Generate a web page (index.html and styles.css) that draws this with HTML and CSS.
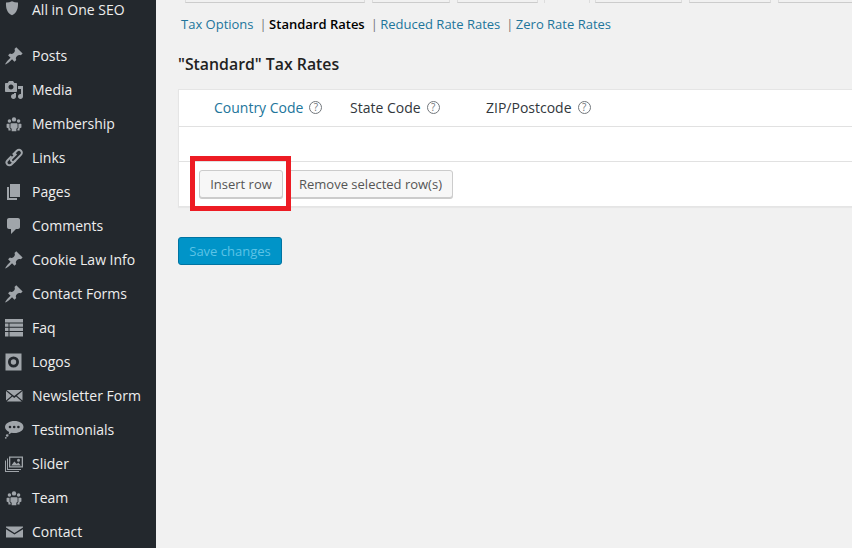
FILE: index.html
```html
<!DOCTYPE html>
<html lang="en">
<head>
<meta charset="utf-8">
<title>Standard Tax Rates</title>
<link rel="stylesheet" href="styles.css">
</head>
<body>
<svg class="defs" width="0" height="0" aria-hidden="true">
  <defs>
    <symbol id="i-pin" viewBox="0 0 20 20"><path d="M10.440 3.020l1.820-1.820 6.360 6.350-1.830 1.820c-1.050-.68-2.480-.57-3.410.36l-.75.75c-.92.93-1.040 2.350-.35 3.410l-1.830 1.820-2.410-2.410-2.800 2.790c-.42.42-3.380 2.710-3.800 2.290s1.860-3.390 2.280-3.810l2.790-2.790L4.100 9.360l1.830-1.820c1.050.69 2.480.57 3.400-.36l.75-.75c.93-.92 1.050-2.350.36-3.410z"/></symbol>
    <symbol id="i-group" viewBox="-2 -2 24 24"><circle cx="10" cy="4.500" r="2.600"/><circle cx="4.500" cy="6.500" r="2.100"/><circle cx="15.500" cy="6.500" r="2.100"/><path d="M6.700 9.200h6.600c.6 0 1 .4 1 1v4.300l-1.500 1.100v3.100H7.200v-3.100l-1.500-1.100v-4.300c0-.6.400-1 1-1z"/><path d="M1.700 9.600h3v5.300l1.200 1v1.900H3.300v-2.300l-2.200-1.400v-3.900c0-.3.300-.6.600-.6zM15.300 9.600h3c.3 0 .6.300.6.6v3.900l-2.200 1.400v2.300h-2.600v-1.900l1.200-1z"/></symbol>
  </defs>
</svg>
<div class="page">
  <nav class="sidebar">
    <ul class="menu">
      <li class="item item-first">
        <span class="icon"><svg viewBox="0 0 25 25"><path d="M10 1.500c2.500 1.200 5 1.600 7.500 1.500.3 6.500-.8 12.700-7.500 16C3.300 15.700 2.200 9.500 2.500 3c2.500.1 5-.3 7.500-1.500z"/></svg></span>
        <span class="label">All in One SEO</span>
      </li>
      <li class="item item-gap"><span class="icon"><svg><use href="#i-pin"/></svg></span><span class="label">Posts</span></li>
      <li class="item">
        <span class="icon"><svg viewBox="0 0 20 20"><path d="M13 11V4c0-.55-.45-1-1-1h-1.670L9 1H5L3.670 3H2c-.55 0-1 .45-1 1v7c0 .55.45 1 1 1h10c.55 0 1-.45 1-1zM7 4.500c1.380 0 2.500 1.120 2.500 2.500S8.380 9.500 7 9.500 4.500 8.380 4.500 7 5.620 4.500 7 4.500zM14 6h5v10.500c0 1.380-1.120 2.500-2.500 2.500S14 17.880 14 16.500s1.120-2.500 2.500-2.500c.17 0 .34.020.5.050V9h-3V6zm-4 8.050V13h2v3.500c0 1.380-1.120 2.500-2.500 2.500S7 17.880 7 16.500 8.120 14 9.500 14c.17 0 .34.020.5.050z"/></svg></span>
        <span class="label">Media</span>
      </li>
      <li class="item"><span class="icon"><svg><use href="#i-group"/></svg></span><span class="label">Membership</span></li>
      <li class="item">
        <span class="icon"><svg viewBox="0 0 20 20" class="stroke"><path d="M8.800 6.800l4-4c1.300-1.200 3.100-1.200 4.200-.1 1.200 1.200 1.100 3-.1 4.200l-6.200 6.300c-1 1-2.300 1-3.100.2-.8-.8-.8-2 .1-2.900l4.700-4.700"/><path d="M7.500 8.200l-3.900 4c-1.300 1.300-1.400 3.100-.2 4.300 1.200 1.200 3 1.100 4.300-.2l4-4"/></svg></span>
        <span class="label">Links</span>
      </li>
      <li class="item">
        <span class="icon"><svg viewBox="0 0 20 20"><path d="M6 15V2h10v13H6zm-1 1h8v2H3V5h2v11z"/></svg></span>
        <span class="label">Pages</span>
      </li>
      <li class="item">
        <span class="icon"><svg viewBox="0 0 20 20"><path d="M5 2h9c1.100 0 2 .9 2 2v7c0 1.100-.9 2-2 2h-2l-5 5v-5H5c-1.100 0-2-.9-2-2V4c0-1.100.9-2 2-2z"/></svg></span>
        <span class="label">Comments</span>
      </li>
      <li class="item"><span class="icon"><svg><use href="#i-pin"/></svg></span><span class="label">Cookie Law Info</span></li>
      <li class="item"><span class="icon"><svg><use href="#i-pin"/></svg></span><span class="label">Contact Forms</span></li>
      <li class="item">
        <span class="icon"><svg viewBox="0 0 20 20"><path d="M1 1h18v3.500H1zM1 5.500h3.500v3.200H1zM5.500 5.500H19v3.200H5.500zM1 9.700h3.500v3.200H1zM5.500 9.700H19v3.200H5.500zM1 13.900h3.500v4.600H1zM5.500 13.900H19v4.600H5.500z"/></svg></span>
        <span class="label">Faq</span>
      </li>
      <li class="item">
        <span class="icon"><svg viewBox="0 0 20 20"><path fill-rule="evenodd" d="M1.500 1.500h16v17h-16zM9.500 4.500a5.500 5.500 0 1 0 0 11 5.500 5.500 0 0 0 0-11zM9.500 7.300a2.700 2.700 0 1 1 0 5.400 2.700 2.700 0 0 1 0-5.400z"/></svg></span>
        <span class="label">Logos</span>
      </li>
      <li class="item">
        <span class="icon"><svg viewBox="0 0 20 20"><path d="M2.500 4h15.500L10.200 10zM2 5l5.600 4.800L2 14.500zM18.500 5v9.500l-5.600-4.700zM8.400 10.500l1.800 1.400 1.900-1.400 5.700 5H2.700z"/></svg></span>
        <span class="label">Newsletter Form</span>
      </li>
      <li class="item">
        <span class="icon"><svg viewBox="0 0 20 20"><path fill-rule="evenodd" d="M10.500 1c5 0 9 2.500 9 6s-4 6-9 6c-1.100 0-2-.1-2.900-.3L4.500 14.500l.7-2.600C2.700 10.900 1 9.100 1 7c0-3.500 4.500-6 9.500-6zM6 5.700a1.300 1.300 0 1 0 0 2.600 1.300 1.300 0 0 0 0-2.600zM10.200 5.700a1.300 1.300 0 1 0 0 2.600 1.300 1.300 0 0 0 0-2.600zM14.400 5.700a1.300 1.300 0 1 0 0 2.600 1.300 1.300 0 0 0 0-2.600z"/><circle cx="3.200" cy="15.500" r="1.300"/><circle cx="1.800" cy="17.800" r=".9"/></svg></span>
        <span class="label">Testimonials</span>
      </li>
      <li class="item">
        <span class="icon"><svg viewBox="0 0 20 20"><path fill-rule="evenodd" d="M5 2.500h14v11H5zM6.300 3.800v8.400h11.400V3.800zM7.300 11.500l3-4 2.500 2.500 1.500-1.500 2.500 3zM14.500 4.700a1.500 1.500 0 1 1 0 3 1.500 1.500 0 0 1 0-3z"/><path d="M3 4.500h1v10.500h13v1H3z"/><path d="M1 6.500h1v10.500h13v1H1z"/></svg></span>
        <span class="label">Slider</span>
      </li>
      <li class="item"><span class="icon"><svg><use href="#i-group"/></svg></span><span class="label">Team</span></li>
      <li class="item">
        <span class="icon"><svg viewBox="0 0 20 20"><path d="M2 4.500h17v1L10.500 11 2 5.500zM2 7.200l8.500 5.300L19 7.200V15.500H2z"/></svg></span>
        <span class="label">Contact</span>
      </li>
    </ul>
  </nav>
  <main class="content">
    <div class="tabs">
      <span class="tab tab-1"></span>
      <span class="tab tab-2"></span>
      <span class="tab tab-3"></span>
      <span class="tab tab-active"></span>
      <span class="tab tab-4"></span>
      <span class="tab tab-5"></span>
      <span class="tab tab-6"></span>
    </div>
    <ul class="subnav">
      <li><a class="sublink">Tax Options</a><span class="sep">|</span></li>
      <li><a class="sublink current">Standard Rates</a><span class="sep">|</span></li>
      <li><a class="sublink">Reduced Rate Rates</a><span class="sep">|</span></li>
      <li><a class="sublink">Zero Rate Rates</a></li>
    </ul>
    <h2 class="title">"Standard" Tax Rates</h2>
    <section class="panel">
      <div class="head-row">
        <div class="cell cell-country"><span class="link-text">Country Code</span><span class="help">?</span></div>
        <div class="cell"><span>State Code</span><span class="help">?</span></div>
        <div class="cell"><span>ZIP/Postcode</span><span class="help">?</span></div>
      </div>
      <div class="empty-row"></div>
      <div class="foot-row">
        <button class="btn btn-insert" type="button">Insert row</button>
        <button class="btn btn-remove" type="button">Remove selected row(s)</button>
        <span class="highlight"></span>
      </div>
    </section>
    <button class="save" type="button">Save changes</button>
  </main>
</div>
</body>
</html>
```
FILE: styles.css
```css
* { box-sizing: border-box; }
html, body { margin: 0; padding: 0; height: 100%; }
body {
  background: #f1f1f1;
  font-family: "Open Sans", "Liberation Sans", sans-serif;
  color: #444;
  overflow: hidden;
}
.defs { position: absolute; }
.page { display: flex; width: 852px; height: 548px; overflow: hidden; }

.sidebar { flex: 0 0 156px; background: #23282d; height: 100%; overflow: hidden; }
.menu { list-style: none; margin: 0; padding: 0; }
.item {
  display: flex;
  align-items: center;
  height: 34px;
  font-size: 14px;
  color: #eee;
}
.item-first { height: 20px; }
.item-gap { margin-top: 19px; }
.icon { flex: 0 0 32px; display: flex; justify-content: flex-start; padding-left: 4px; }
.icon svg { width: 20px; height: 20px; fill: #a0a5aa; }
.icon svg.stroke { fill: none; stroke: #a0a5aa; stroke-width: 2; }
.label { white-space: nowrap; padding-bottom: 2px; }

.content { flex: 1; min-width: 0; padding-left: 22px; overflow: hidden; }
.tabs { display: flex; height: 3px; gap: 7px; padding-left: 7px; }
.tab {
  height: 3px;
  border: 1px solid #ddd;
  border-top: 0;
  border-bottom-color: #ccc;
  flex: none;
}
.tab-1 { width: 180px; }
.tab-2 { width: 78px; }
.tab-3 { width: 81px; }
.tab-active { width: 46px; border-bottom: 0; margin: 0 -2px 0 -1px; }
.tab-4 { width: 87px; }
.tab-5 { width: 82px; }
.tab-6 { width: 80px; }

.subnav {
  display: flex;
  list-style: none;
  margin: 12px 0 0;
  padding: 0 0 0 3px;
  font-size: 13px;
  line-height: 18px;
}
.subnav li { white-space: nowrap; }
.sublink { color: #21759b; }
.sublink.current { color: #000; font-weight: 600; }
.sep { color: #777; margin: 0 2.400px 0 6px; }

.title {
  margin: 20px 0 0;
  font-size: 15.840px;
  line-height: 22px;
  font-weight: 600;
  color: #222;
}

.panel {
  margin-top: 14px;
  width: 700px;
  height: 118px;
  background: #fff;
  border: 1px solid #e5e5e5;
  box-shadow: 0 1px 1px rgba(0, 0, 0, .04);
}
.head-row {
  display: flex;
  align-items: center;
  height: 37px;
  padding-bottom: 2px;
  border-bottom: 1px solid #e1e1e1;
  font-size: 14px;
  color: #32373c;
}
.cell { flex: 0 0 136px; display: flex; align-items: center; white-space: nowrap; }
.cell-country { flex-basis: 171px; padding-left: 35px; }
.link-text { color: #21759b; }
.help {
  width: 13px;
  height: 13px;
  margin-left: 6px;
  border: 1px solid #72777c;
  border-radius: 50%;
  color: #72777c;
  font-size: 10px;
  line-height: 11px;
  text-align: center;
  flex: none;
}
.empty-row { height: 35px; border-bottom: 1px solid #e1e1e1; }
.foot-row {
  position: relative;
  display: flex;
  align-items: flex-start;
  gap: 5px;
  padding: 8px 0 0 20px;
}
.btn {
  height: 28px;
  padding: 0 10px 1px;
  background: #f7f7f7;
  border: 1px solid #ccc;
  border-radius: 3px;
  box-shadow: 0 1px 0 #ccc;
  color: #555;
  font: 13px/26px "Open Sans", "Liberation Sans", sans-serif;
  white-space: nowrap;
}
.btn-insert { width: 84px; padding: 0; }
.btn-remove { width: 165px; padding: 0; }
.highlight {
  position: absolute;
  left: 11px;
  top: -6px;
  width: 101px;
  height: 55px;
  border: 5px solid #ed1c24;
  pointer-events: none;
}

.save {
  display: block;
  margin-top: 30px;
  width: 104px;
  height: 28px;
  padding: 0 0 1px;
  background: #0094c8;
  border: 1px solid #0074a2;
  border-radius: 3px;
  color: #5cc3e6;
  font: 13px/26px "Open Sans", "Liberation Sans", sans-serif;
}
```
